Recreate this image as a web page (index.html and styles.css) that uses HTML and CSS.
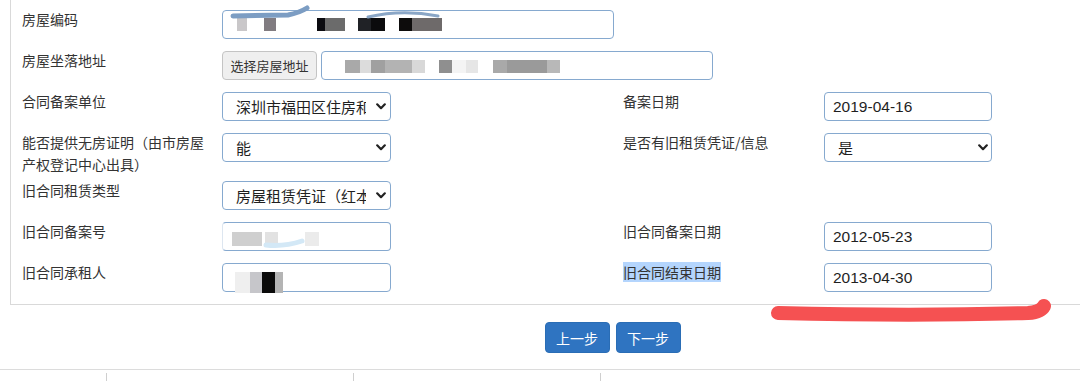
FILE: index.html
```html
<!DOCTYPE html>
<html lang="zh-CN">
<head>
    <meta charset="UTF-8">
    <meta name="viewport" content="width=device-width, initial-scale=1.0">
    <title>合同备案信息</title>
    <link rel="stylesheet" href="styles.css">
</head>
<body>
    <!-- Contract filing panel: label / control pairs on a four column grid -->
    <div class="panel">
        <div class="form-grid">
            <label class="label">房屋编码</label>
            <div class="field field-wide">
                <span class="mask mask-code"></span>
            </div>
            <span></span><span></span>

            <label class="label">房屋坐落地址</label>
            <div class="address">
                <button type="button" class="btn-default">选择房屋地址</button>
                <div class="field field-wide">
                    <span class="mask mask-address"></span>
                </div>
            </div>

            <label class="label">合同备案单位</label>
            <div class="select-wrap">
                <select class="select">
                    <option>深圳市福田区住房和建设局</option>
                </select>
                <svg class="chevron" viewBox="0 0 10 7"><path d="M1.2 1.3 L5 5.2 L8.8 1.3"/></svg>
            </div>
            <label class="label">备案日期</label>
            <input class="input date" type="text" value="2019-04-16">

            <label class="label label-tall">能否提供无房证明（由市房屋产权登记中心出具）</label>
            <div class="select-wrap">
                <select class="select">
                    <option>能</option>
                </select>
                <svg class="chevron" viewBox="0 0 10 7"><path d="M1.2 1.3 L5 5.2 L8.8 1.3"/></svg>
            </div>
            <label class="label">是否有旧租赁凭证/信息</label>
            <div class="select-wrap">
                <select class="select date">
                    <option>是</option>
                </select>
                <svg class="chevron" viewBox="0 0 10 7"><path d="M1.2 1.3 L5 5.2 L8.8 1.3"/></svg>
            </div>

            <label class="label">旧合同租赁类型</label>
            <div class="select-wrap">
                <select class="select">
                    <option>房屋租赁凭证（红本）</option>
                </select>
                <svg class="chevron" viewBox="0 0 10 7"><path d="M1.2 1.3 L5 5.2 L8.8 1.3"/></svg>
            </div>
            <span></span><span></span>

            <label class="label">旧合同备案号</label>
            <div class="field field-narrow field-fade">
                <span class="mask mask-number"></span>
            </div>
            <label class="label">旧合同备案日期</label>
            <input class="input date" type="text" value="2012-05-23">

            <label class="label">旧合同承租人</label>
            <div class="field field-narrow field-low">
                <span class="mask mask-tenant"></span>
            </div>
            <label class="label"><span class="selected">旧合同结束日期</span></label>
            <input class="input date" type="text" value="2013-04-30">
        </div>
    </div>

    <div class="actions">
        <button type="button" class="btn-primary">上一步</button>
        <button type="button" class="btn-primary">下一步</button>
    </div>

    <!-- Start of the table below the form -->
    <div class="table-head">
        <span class="th"></span>
        <span class="th"></span>
        <span class="th"></span>
    </div>

    <!-- Pen marks drawn over the screenshot -->
    <svg class="marks" viewBox="0 0 1080 381">
        <path class="mark-blue" d="M233 16 L288 15 Q299 13 307 8"/>
        <path class="mark-arc" d="M368 17 Q402 9 438 16"/>
        <path class="mark-wisp" d="M266 245 Q284 247 302 241"/>
        <path class="mark-red" d="M778 313 C 860 315, 960 315, 1028 313 Q 1041 312 1044 306"/>
    </svg>
</body>
</html>
```

FILE: styles.css
```css
body {
    margin: 0;
    font-family: "Noto Sans CJK SC", "Liberation Sans", sans-serif;
    font-size: 14px;
    color: #333;
    background-color: #fff;
    overflow: hidden;
}

.panel {
    margin-left: 10px;
    padding: 10px 0 12px 11px;
    border-left: 1px solid #d9d9d9;
    border-bottom: 1px solid #d9d9d9;  /* top and right edges are off screen */
}

.form-grid {
    display: grid;
    grid-template-columns: 200px 401px 201px 200px;
    row-gap: 12px;
    align-items: start;
}

.label {
    line-height: 22px;
    margin-top: -2px;
    padding-right: 10px;
}

.label-tall {
    height: 38px;
}

.selected {
    background-color: #b4d5fd;
}

/* inputs, fake fields and selects share the same blue-grey border */
.input,
.field,
.select {
    box-sizing: border-box;
    height: 29px;
    border: 1px solid #86a9cf;
    border-radius: 4px;
    background-color: #fff;
    font-family: "Liberation Sans", "Noto Sans CJK SC", sans-serif;
    font-size: 15px;
    color: #1f1f1f;
}

.input {
    padding: 0 8px;
    font-size: 15.5px;
    outline: none;
}

.date {
    width: 168px;
}

.field {
    display: flex;
    align-items: center;
    position: relative;
}

.field-wide {
    width: 392px;
}

.field-narrow {
    width: 169px;
}

.address {
    grid-column: 2 / 5;
    display: flex;
    gap: 4px;
}

.btn-default {
    height: 29px;
    width: 95px;
    padding: 0;
    border: 1px solid #c4c4c4;
    border-radius: 4px;
    background-color: #efefef;
    font-family: "Noto Sans CJK SC", sans-serif;
    font-size: 13px;
    color: #333;
}

.select-wrap {
    position: relative;
    width: 169px;
    height: 29px;
}

.select {
    width: 169px;
    appearance: none;
    -webkit-appearance: none;
    padding: 0 24px 0 13px;
    font-family: "Noto Sans CJK SC", "Liberation Sans", sans-serif;
}

.select.date {
    width: 168px;
}

.chevron {
    position: absolute;
    right: 5px;
    top: 11px;
    width: 10px;
    height: 7px;
    fill: none;
    stroke: #222;
    stroke-width: 2.2;
    stroke-linecap: round;
    stroke-linejoin: round;
    pointer-events: none;
}

/* blurred / censored values */
.mask {
    display: block;
    height: 13px;
}

.mask-code {
    margin-left: 14px;
    margin-top: -1px;
    width: 205px;
    background: linear-gradient(to right,
        #c9c7c9 0 10px, transparent 10px 27px, #817c81 27px 39px, transparent 39px 80px,
        #0b0b10 80px 88px, #6b6b6b 88px 108px, transparent 108px 121px, #202226 121px 134px,
        #0b0b0d 134px 148px, transparent 148px 162px, #0d0c0c 162px 175px, #6e6a6a 175px 203px);
}

.mask-address {
    margin-left: 23px;
    margin-top: 2px;
    width: 215px;
    background: linear-gradient(to right,
        #a9a9a9 0 15px, #dcdcdc 15px 26px, #a0a0a0 26px 40px, #b3b3b3 40px 67px,
        #d8d8d8 67px 80px, transparent 80px 94px, #8f8f8f 94px 107px, #f4f4f4 107px 121px,
        #e6e6e6 121px 133px, transparent 133px 148px, #a9a9a9 148px 162px,
        #9a9a9a 162px 202px, #b8b8b8 202px 215px);
}

.field-fade {
    border-left-color: #dde6f0;
}

.mask-number {
    margin-left: 9px;
    margin-top: 4px;
    width: 87px;
    height: 14px;
    background: linear-gradient(to right,
        #cfcfcf 0 30px, transparent 30px 33px, #e2e2e2 33px 46px, transparent 46px 73px,
        #ebebeb 73px 87px);
}

.field-low {
    align-items: flex-end;
}

.mask-tenant {
    margin-left: 12px;
    margin-bottom: -2px;
    width: 48px;
    height: 21px;
    background: linear-gradient(to right,
        #efefef 0 15px, #c6c6ca 15px 27px, #0a0a0a 27px 40px, #b4b4b4 40px 48px);
}

.actions {
    display: flex;
    justify-content: center;
    gap: 6px;
    padding-left: 145px;
    margin-top: 17px;
    padding-bottom: 16px;
    border-bottom: 1px solid #dcdcdc;
}

.btn-primary {
    width: 65px;
    height: 31px;
    padding: 0;
    border: 1px solid #2a6db5;
    border-radius: 4px;
    background-color: #2f74c1;
    color: #fff;
    font-family: "Noto Sans CJK SC", sans-serif;
    font-size: 14px;
}

.table-head {
    display: flex;
    padding-left: 106px;
    margin-top: 3px;
}

.th {
    width: 246px;
    height: 9px;
    border-left: 1px solid #cfcfcf;
}

.marks {
    position: absolute;
    left: 0;
    top: 0;
    width: 1080px;
    height: 381px;
    fill: none;
    stroke-linecap: round;
    pointer-events: none;
}

.mark-blue {
    stroke: #7c9dc3;
    stroke-width: 5;
}

.mark-arc {
    stroke: #8aa6c6;
    stroke-width: 3;
}

.mark-wisp {
    stroke: #d3e8f6;
    stroke-width: 5;
}

.mark-red {
    stroke: #f55152;
    stroke-width: 14;
}
```
